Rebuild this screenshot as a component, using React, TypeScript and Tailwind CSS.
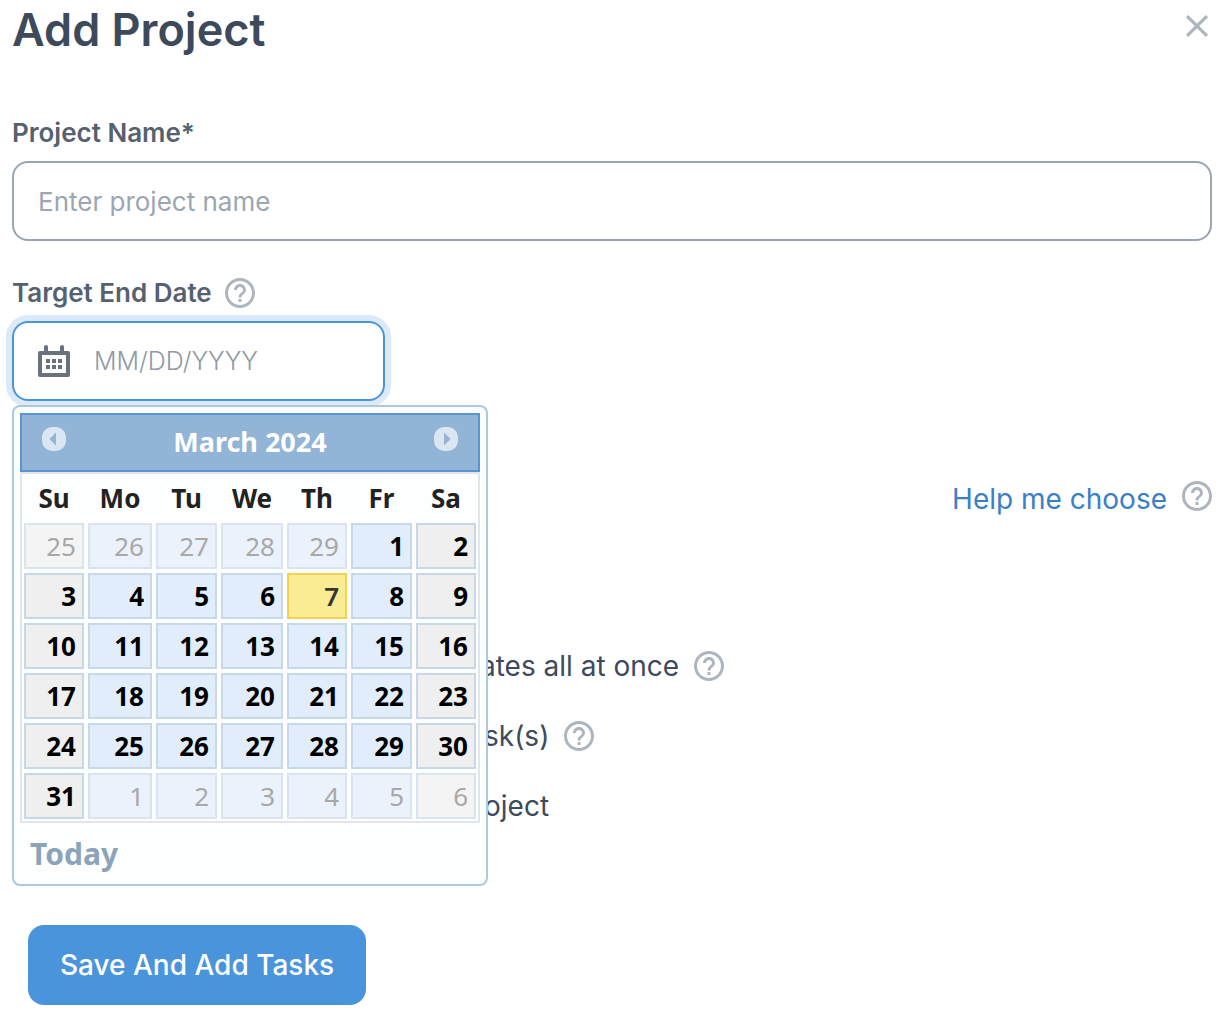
import React, { useState } from 'react';
import { MdClose, MdHelpOutline } from 'react-icons/md';

const columns = [
  { label: 'Su', name: 'Sunday', width: 'w-[64px]' },
  { label: 'Mo', name: 'Monday', width: 'w-[68px]' },
  { label: 'Tu', name: 'Tuesday', width: 'w-[65px]' },
  { label: 'We', name: 'Wednesday', width: 'w-[66px]' },
  { label: 'Th', name: 'Thursday', width: 'w-[64px]' },
  { label: 'Fr', name: 'Friday', width: 'w-[65px]' },
  { label: 'Sa', name: 'Saturday', width: 'w-[64px]' },
];

const weeks = [
  [25, 26, 27, 28, 29, 1, 2],
  [3, 4, 5, 6, 7, 8, 9],
  [10, 11, 12, 13, 14, 15, 16],
  [17, 18, 19, 20, 21, 22, 23],
  [24, 25, 26, 27, 28, 29, 30],
  [31, 1, 2, 3, 4, 5, 6],
];

const options = [
  { id: 'bulk', label: 'ates all at once', gap: 'gap-[424px]', help: true },
  { id: 'single', label: 'sk(s)', gap: 'gap-[428px]', help: true },
  { id: 'copy', label: 'oject', gap: 'gap-[428px]', help: false },
];

const HelpButton = ({ label }: { label: string }) => (
  <button type="button" aria-label={label} className="shrink-0 text-[#adb5bf]">
    <MdHelpOutline className="size-9" />
  </button>
);

const CalendarIcon = () => (
  <svg className="size-8 shrink-0 text-[#69727d]" viewBox="0 0 32 32" fill="currentColor" aria-hidden="true">
    <path d="M6 7V2a2 2 0 0 1 4 0v5zM22 7V2a2 2 0 0 1 4 0v5z" />
    <path fillRule="evenodd" d="M2 6h28a2 2 0 0 1 2 2v22a2 2 0 0 1-2 2H2a2 2 0 0 1-2-2V8a2 2 0 0 1 2-2zM4 10v18h24V10z" />
    <path d="M8 14h4v4H8zM14 14h4v4h-4zM20 14h4v4h-4zM8 20h4v4H8zM14 20h4v4h-4zM20 20h4v4h-4z" />
  </svg>
);

const MonthArrow = ({ next = false }: { next?: boolean }) => (
  <svg className="size-[26px]" viewBox="0 0 26 26" aria-hidden="true">
    <rect x="1" y="1" width="24" height="24" rx="10" fill="#dae6f2" />
    <path d={next ? 'M11 6.5v13l6.5-6.5z' : 'M15 6.5v13L8.5 13z'} fill="#91b4d7" />
  </svg>
);

const dayClass = (day: number, week: number, col: number) => {
  const outside = (week === 0 && day > 7) || (week === 5 && day < 7);
  const weekend = col === 0 || col === 6;
  if (day === 7 && week === 1) return 'border-[#f3d24f] bg-[#f9ec93] text-[#363636] font-semibold';
  if (outside && weekend) return 'border-[#d8e4f0] bg-[#f4f4f4] text-[#a8a8a8]';
  if (outside) return 'border-[#d8e4f0] bg-[#ebf2fc] text-[#a8a8a8]';
  if (weekend) return 'border-[#c7d9e9] bg-[#efefef] text-black font-bold';
  return 'border-[#c7d9e9] bg-[#e2edfc] text-black font-bold';
};

const DatePicker = () => (
  <div className="absolute left-0 top-full z-10 mt-1 w-max rounded-lg border-2 border-[#adc8e1] bg-[#fdfefe] p-1.5 font-['Noto_Sans',sans-serif]">
    <div className="flex h-[59px] items-start justify-between border-2 border-[#5a94d2] bg-[#91b4d7] px-[19px] pt-[11px] text-white">
      <button type="button" aria-label="Previous month">
        <MonthArrow />
      </button>
      <div className="text-[27px] leading-8 font-bold">March 2024</div>
      <button type="button" aria-label="Next month">
        <MonthArrow next />
      </button>
    </div>
    <table className="border-separate border-spacing-0 border-2 border-[#e1e6ec] text-[26px]">
      <thead>
        <tr className="h-[47px]">
          {columns.map((column) => (
            <th key={column.label} scope="col" abbr={column.name} className="p-0 leading-8 font-bold text-[#222222]">
              <div className={column.width}>{column.label}</div>
            </th>
          ))}
        </tr>
      </thead>
      <tbody>
        {weeks.map((week, i) => (
          <tr key={i}>
            {week.map((day, j) => (
              <td key={j} className="p-0.5">
                <button type="button" className={`block h-[46px] w-full border-2 pr-1.5 text-right leading-8 ${dayClass(day, i, j)}`}>
                  {day}
                </button>
              </td>
            ))}
          </tr>
        ))}
      </tbody>
    </table>
    <button type="button" className="block h-[55px] px-2.5 pt-1.5 text-[30px] leading-8 font-bold text-[#8ba4b9]">
      Today
    </button>
  </div>
);

const App = () => {
  const [option, setOption] = useState('bulk');

  return (
    <form className="min-h-screen bg-white pl-3 pr-3.5 pb-3 font-['Inter',sans-serif] text-[#3d4a5c]">
      <header className="flex h-[60px] items-center justify-between">
        <h1 className="text-[45px] leading-[60px] font-semibold">Add Project</h1>
        <button type="button" aria-label="Close" className="-mt-2 -mr-1 text-[#adb5bf]">
          <MdClose className="size-[38px]" />
        </button>
      </header>

      <label htmlFor="project-name" className="mt-[53px] block h-12 text-[26px] leading-10 font-semibold text-[#56616f]">
        Project Name*
      </label>
      <input
        id="project-name"
        type="text"
        placeholder="Enter project name"
        className="h-20 w-full rounded-2xl border-2 border-[#9aa5b1] px-6 text-[26px] outline-none placeholder:text-[#9ca6b0]"
      />

      <div className="mt-8 flex h-12 items-start gap-2.5">
        <label htmlFor="end-date" className="text-[26px] leading-10 font-semibold text-[#56616f]">
          Target End Date
        </label>
        <span className="pt-0.5">
          <HelpButton label="About target end date" />
        </span>
      </div>
      <div className="relative w-fit">
        <div className="flex h-20 w-[373px] items-center gap-6 rounded-2xl border-2 border-[#4a94dc] px-6 ring-6 ring-[#dbe9f8]">
          <CalendarIcon />
          <input
            id="end-date"
            type="text"
            placeholder="MM/DD/YYYY"
            className="h-10 w-full min-w-0 text-[25px] leading-10 font-light outline-none placeholder:text-[#9099a4]"
          />
        </div>
        <DatePicker />
      </div>

      <div className="mt-[77px] flex items-center justify-end gap-3">
        <a href="#help" className="text-[28px] leading-9 text-[#3a80c8]">
          Help me choose
        </a>
        <span className="-mr-[3px]">
          <HelpButton label="About choosing" />
        </span>
      </div>

      <div className="mt-[128px] flex flex-col gap-[34px] pl-4">
        {options.map(({ id, label, gap, help }) => (
          <div key={id} className="flex h-9 items-center gap-3">
            <label className={`flex items-center text-[28px] leading-9 ${gap}`}>
              <input type="radio" name="option" className="size-7" checked={option === id} onChange={() => setOption(id)} />
              {label}
            </label>
            {help && <HelpButton label="More about this option" />}
          </div>
        ))}
      </div>

      <button type="submit" className="mt-[101px] ml-4 h-20 rounded-2xl bg-[#4a94dc] px-8 text-[28px] font-medium text-white">
        Save And Add Tasks
      </button>
    </form>
  );
};

export default App;
